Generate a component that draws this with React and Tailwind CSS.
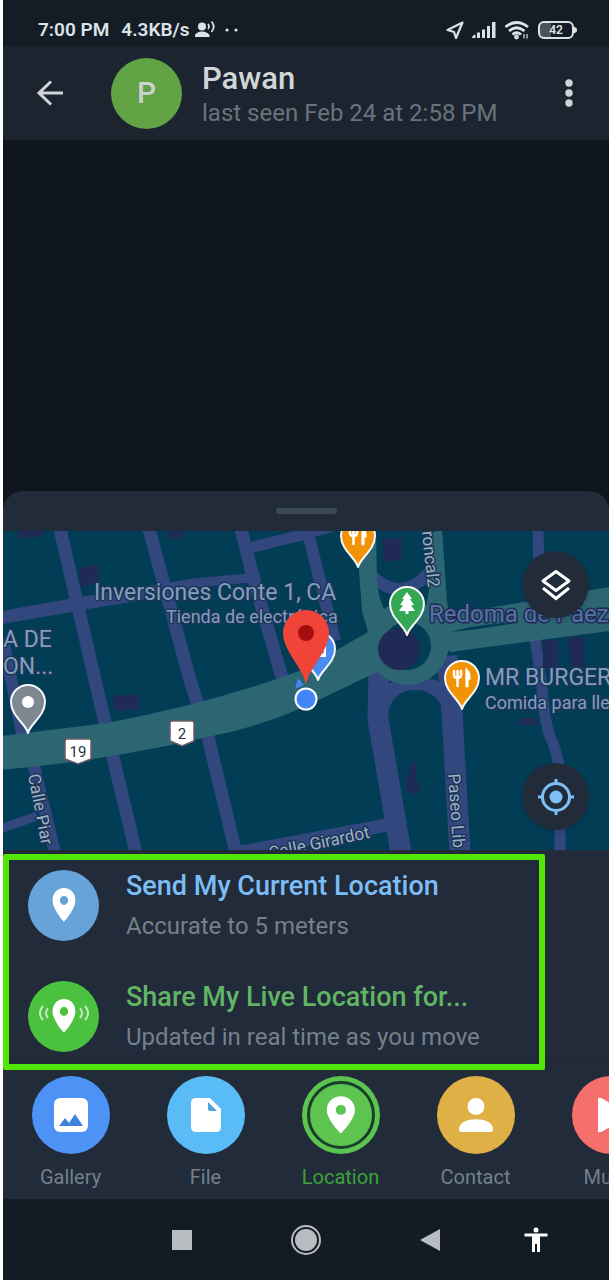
import { useState } from 'react';

const PIN_PATH = 'M0 31 C-2 22 -17 14 -17 0 A17 17 0 0 1 17 0 C17 14 2 22 0 31 Z';
const MARKER_PATH = 'M12 1 C5.7 1 1 5.7 1 12 C1 20 12 31 12 31 C12 31 23 20 23 12 C23 5.7 18.3 1 12 1 Z M12 8 A4 4 0 1 1 12 16 A4 4 0 1 1 12 8 Z';

const streets = [
    { d: 'M57 -2 L92 149 L110 226 L133 322', w: 13 },
    { d: 'M146 -2 L187 149 L205 206 L233 322', w: 13 },
    { d: 'M238 -2 L250 46 L280 150', w: 13 },
    { d: 'M0 108 L19 202 L32 239 L52 322', w: 12 },
    { d: 'M-3 87 L70 74 L140 62', w: 13 },
    { d: 'M130 62 L190 52 L257 46', w: 9 },
    { d: 'M246 17 L299 4 L330 -5', w: 11 },
    { d: 'M304 -2 L316 46 L332 110', w: 12 },
    { d: 'M-3 298 L34 285', w: 9 },
    { d: 'M228 323 L384 294', w: 13 },
    { d: 'M370 46 Q398 72 426 42', w: 12 },
    { d: 'M535 -2 L536 40 L532 107 L539 156 Q541 195 550 212 Q557 232 557 250 L557 322', w: 11 },
    { d: 'M376 140 L375 189 L384 240 L398 322', w: 21 },
    { d: 'M444 125 L449 182 L457 322', w: 21 },
    { d: 'M380 174 Q388 152 412 152 Q436 152 446 174', w: 14 },
];

const buildings = [
    'M14 0 H40 V5 L16 8 Z',
    'M76 37 L95 33 L96 52 L78 56 Z',
    'M164 0 H180 V8 H166 Z',
    'M380 7 H399 V29 L380 31 Z',
    'M540 109 H555 V137 H540 Z',
    'M565 106 H581 V136 H567 Z',
    'M110 165 L136 163 V178 L112 180 Z',
    'M517 187 H535 V194 H517 Z',
    'M409 228 L414 235 L413 248 L418 256 L413 264 L403 260 L403 250 L406 242 Z',
];

const Pin = ({ x, y, color, children }) => (
    <g transform={`translate(${x} ${y})`}>
        <path d={PIN_PATH} fill={color} stroke="#f5f7f8" strokeWidth="2" strokeLinejoin="round" />
        {children}
    </g>
);

const Cutlery = () => (
    <g fill="none" stroke="#fff" strokeLinecap="round">
        <path d="M-8 -7 V-3 Q-8 0 -4.5 0 Q-1 0 -1 -3 V-7 M-4.5 -7 V8" strokeWidth="2.6" />
        <path d="M5 8 V-7 Q7 -5 7 0 H5" strokeWidth="3.2" fill="#fff" />
    </g>
);

const Shield = ({ x, y, w, label }) => (
    <g transform={`translate(${x} ${y})`}>
        <path
            d={`M2 0 H${w - 2} Q${w} 0 ${w} 2 V20 L${w / 2} 25 L0 20 V2 Q0 0 2 0 Z`}
            fill="#fff"
            stroke="#6b5a66"
            strokeWidth="1.5"
        />
        <text x={w / 2} y="18" textAnchor="middle" fontSize="15" fill="#2b3440">{label}</text>
    </g>
);

const MapCanvas = () => (
    <svg
        viewBox="0 0 606 319"
        preserveAspectRatio="xMidYMid slice"
        className="block h-[319px] w-full bg-[#023d56] font-[Roboto,sans-serif]"
        role="img"
        aria-label="Map"
    >
        <g fill="none" stroke="#33477f" strokeLinejoin="round">
            {streets.map((s) => (
                <path key={s.d} d={s.d} strokeWidth={s.w} />
            ))}
        </g>

        <g fill="#1f2a55">
            {buildings.map((d) => (
                <path key={d} d={d} />
            ))}
        </g>

        {/* Main avenue and roundabout */}
        <g fill="#2b6672">
            <path d="M-2 205 L104 192 Q210 172 299 139 L365 101 L385 125 L374 141 L299 177 Q250 198 200 207 Q100 230 -2 239 Z" />
            <path d="M355 -2 H373 L374 50 Q375 66 382 80 L400 95 L372 112 L365 101 L359 80 L356 40 Z" />
            <path d="M427 -2 H439 L444 70 L446 84 L606 56 V100 L447 121 L420 90 L426 60 Z" />
            <ellipse cx="405" cy="112" rx="41" ry="42" />
        </g>
        <path d="M447 101 Q480 92 512 92 Q480 98 447 101 Z" fill="#023d56" />
        <circle cx="404" cy="115" r="24" fill="#023d56" />
        <circle cx="396" cy="118" r="21" fill="#1f2a55" />

        {/* Labels */}
        <g fill="#7f9fbd" stroke="#1d3557" strokeWidth="3" strokeLinejoin="round" paintOrder="stroke">
            <g fontSize="23">
                <text x="91" y="69">Inversiones Conte 1, CA</text>
                <text x="0" y="116">A DE</text>
                <text x="0" y="143">ON...</text>
                <text x="482" y="154">MR BURGER</text>
            </g>
            <text x="426" y="91" fontSize="24" fill="#5573a3" stroke="#1f2a55">Redoma de Páez</text>
            <g fontSize="18">
                <text x="163" y="92">Tienda de electrónica</text>
                <text x="482" y="178">Comida para lle</text>
            </g>
            <g fontSize="17" fill="#9db3c4">
                <text transform="translate(418 -9) rotate(84)">Troncal2</text>
                <text transform="translate(25 244) rotate(79)">Calle Piar</text>
                <text transform="translate(445 243) rotate(86)">Paseo Lib</text>
                <text transform="translate(267 328) rotate(-12)">Calle Girardot</text>
            </g>
        </g>

        <Shield x={62} y={208} w={26} label="19" />
        <Shield x={167} y={190} w={24} label="2" />

        <Pin x={355} y={5} color="#f29305"><Cutlery /></Pin>
        <Pin x={459} y={147} color="#f29305"><Cutlery /></Pin>
        <Pin x={25} y={171} color="#7d8890"><circle r="6" fill="#fff" /></Pin>
        <Pin x={404} y={73} color="#34a853">
            <path d="M0 -12 L5 -5 H3 L7 1 H4 L8 7 H1.5 V10 H-1.5 V7 H-8 L-4 1 H-7 L-3 -5 H-5 Z" fill="#fff" />
        </Pin>
        <Pin x={315} y={118} color="#4a8df0">
            <path d="M-7 -3 H3 V-5 H8 V8 H-7 Z" fill="#fff" />
            <circle cx="3" cy="2" r="3" fill="#4a8df0" />
        </Pin>

        {/* Current position */}
        <path d="M292 158 L295 147 L301 154 Z" fill="#4285f4" />
        <circle cx="303" cy="168" r="10.5" fill="#4285f4" stroke="#fff" strokeWidth="2" />
        <path d="M303 154 C301 138 280 120 280 102 A23 23 0 0 1 326 102 C326 120 305 138 303 154 Z" fill="#f04438" />
        <circle cx="303" cy="102" r="8" fill="#a50e0e" />
    </svg>
);

const StatusBar = () => (
    <div className="flex h-[46px] items-center justify-between bg-[#141d26] pt-3.5 pr-8 pl-[35px] text-[#dde2e7]">
        <div className="flex items-center text-[19px] leading-6 font-semibold">
            <span>7:00 PM</span>
            <span className="ml-3">4.3KB/s</span>
            <svg className="ml-1 h-5 w-[22px]" viewBox="0 0 22 20" fill="currentColor">
                <circle cx="8" cy="6.5" r="4" />
                <path d="M1 17 V15 Q3 11.5 8 11.5 Q13 11.5 15.5 15 V17 Z" />
                <path d="M14 4 Q16 6.5 14 9 M17.5 1.5 Q22 6.5 17.5 12" fill="none" stroke="currentColor" strokeWidth="1.8" />
            </svg>
            <svg className="ml-2 h-1 w-4" viewBox="0 0 16 4" fill="currentColor">
                <circle cx="3" cy="2" r="1.6" />
                <circle cx="12" cy="2" r="1.6" />
            </svg>
        </div>
        <div className="flex items-center">
            <svg className="h-5 w-[18px]" viewBox="0 0 18 20" fill="none" stroke="currentColor" strokeWidth="2.2" strokeLinejoin="round">
                <path d="M16.5 2.5 L1.5 10 L8 12 L10 18 Z" />
            </svg>
            <svg className="ml-2 h-5 w-6" viewBox="0 0 24 20" fill="currentColor">
                <path d="M0 18 Q0 15.5 3.5 14.5 V18 Z M5 12.500 H8 V18 H5 Z M10 9.500 H13 V18 H10 Z M15 6 H18 V18 H15 Z M20 2 H23.500 V18 H20 Z" />
            </svg>
            <svg className="ml-2 h-5 w-[26px]" viewBox="0 0 26 20" fill="none" stroke="currentColor" strokeWidth="2.8">
                <path d="M1.5 7 Q12.5 -2 24 7 M5 11 Q12.5 4.5 20.5 11 M8.5 14.5 Q12.5 11 17 14.5" />
                <circle cx="12.5" cy="17" r="1" />
                <path d="M20 14 V18.5 M23 14 V18.5" strokeWidth="1.2" />
            </svg>
            <span className="ml-2 flex h-[18px] w-9 items-center justify-center rounded-md border-2 border-current bg-linear-to-r from-[#4b535c] from-35% to-transparent to-35% text-xs leading-3 font-semibold">
                42
            </span>
            <span className="h-1.5 w-[3px] rounded-r bg-current" />
        </div>
    </div>
);

const ChatHeader = () => (
    <header className="flex h-[95px] items-center border-b border-[#111820] bg-[#1c252f] pr-6 pl-[33px]">
        <button type="button" aria-label="Back" className="text-[#d0d4d8]">
            <svg className="h-7 w-7" viewBox="0 0 28 28" fill="none" stroke="currentColor" strokeWidth="3">
                <path d="M27 14 H3 M15 2.5 L3 14 L15 25.5" />
            </svg>
        </button>
        <div className="ml-[47px] flex h-[71px] w-[71px] items-center justify-center rounded-full bg-[#61a244] text-3xl font-medium text-[#cbd0d0]">
            P
        </div>
        <div className="ml-5 flex-1 pt-[3px]">
            <h1 className="text-[31px] leading-9 font-medium text-[#d2d5d8]">Pawan</h1>
            <p className="text-2xl leading-8 text-[#69737e]">last seen Feb 24 at 2:58 PM</p>
        </div>
        <button type="button" aria-label="More options" className="text-[#d0d4d8]">
            <svg className="h-8 w-8" viewBox="0 0 32 32" fill="currentColor">
                <circle cx="16" cy="6" r="3.7" />
                <circle cx="16" cy="16" r="3.7" />
                <circle cx="16" cy="26" r="3.7" />
            </svg>
        </button>
    </header>
);

const LocationOption = ({ title, subtitle, titleClass, iconClass, live }) => (
    <button type="button" className="flex w-full items-center text-left">
        <span className={`flex h-[71px] w-[71px] shrink-0 items-center justify-center rounded-full ${iconClass}`}>
            <svg className="h-9 w-[54px]" viewBox="0 0 54 36" fill="#fff">
                <path d={MARKER_PATH} fillRule="evenodd" transform="translate(14.5 0) scale(1.04 1.12)" />
                {live && (
                    <g fill="none" stroke="#c5ecc0" strokeWidth="2">
                        <path d="M6 8 Q0 15 6 22 M11 10 Q7 15 11 20 M48 8 Q54 15 48 22 M43 10 Q47 15 43 20" />
                    </g>
                )}
            </svg>
        </span>
        <span className="ml-[27px] block pt-0.5">
            <span className={`block text-[27px] leading-10 font-medium ${titleClass}`}>{title}</span>
            <span className="block text-2xl leading-10 text-[#76808b]">{subtitle}</span>
        </span>
    </button>
);

const attachTabs = [
    {
        id: 'gallery',
        label: 'Gallery',
        bg: 'bg-[#4d93f5]',
        icon: (
            <>
                <rect x="3" y="3" width="34" height="34" rx="6" fill="#fff" />
                <path d="M8 31 L14 23 L18 28 L24 19 L32 31 Z" fill="#3f83df" />
            </>
        ),
    },
    {
        id: 'file',
        label: 'File',
        bg: 'bg-[#59bcf6]',
        icon: (
            <>
                <path d="M10 3 H24 L35 14 V32 Q35 37 30 37 H10 Q5 37 5 32 V8 Q5 3 10 3 Z" fill="#fff" />
                <path d="M22 7 L31 16 H24 Q22 16 22 14 Z" fill="#4aa3dc" />
            </>
        ),
    },
    {
        id: 'location',
        label: 'Location',
        bg: 'bg-[#5cc44f]',
        icon: <path d={MARKER_PATH} fill="#fff" fillRule="evenodd" transform="translate(4.5 0) scale(1.28 1.24)" />,
    },
    {
        id: 'contact',
        label: 'Contact',
        bg: 'bg-[#dfb046]',
        icon: (
            <>
                <circle cx="20" cy="11.5" r="8.5" fill="#fff" />
                <path d="M3 34 C3 21 37 21 37 34 Q37 37 34 37 H6 Q3 37 3 34 Z" fill="#fff" />
            </>
        ),
    },
    {
        id: 'music',
        label: 'Music',
        bg: 'bg-[#f56f6c]',
        icon: <path d="M7 3 Q9 2 12 4 L34 17 Q38 20 34 23 L12 36 Q9 38 7 37 Z" fill="#fff" />,
    },
];

const AttachTabs = () => {
    const [active, setActive] = useState('location');

    return (
        <nav className="flex h-[141px] overflow-hidden border-t border-[#1c2632] pt-[17px]">
            {attachTabs.map((tab) => {
                const isActive = tab.id === active;
                return (
                    <button
                        key={tab.id}
                        type="button"
                        onClick={() => setActive(tab.id)}
                        className="flex w-[135px] shrink-0 flex-col items-center"
                    >
                        <span className={`flex h-[78px] w-[78px] items-center justify-center rounded-full p-[5px] ${tab.bg}`}>
                            <span
                                className={`flex h-full w-full items-center justify-center rounded-full border-[3px] ${isActive
                                    ? 'border-[#173f2b]'
                                    : 'border-transparent'
                                }`}
                            >
                                <svg className="h-10 w-10 shrink-0" viewBox="0 0 40 40">{tab.icon}</svg>
                            </span>
                        </span>
                        <span className={`mt-2 text-xl leading-[30px] ${isActive ? 'text-[#3ea23b]' : 'text-[#74808c]'}`}>
                            {tab.label}
                        </span>
                    </button>
                );
            })}
        </nav>
    );
};

const SystemNav = () => (
    <div className="grid h-[81px] grid-cols-[1fr_124px_124px_124px_1fr] items-center bg-[#131c25] text-[#b9bcc0]">
        <button type="button" aria-label="Recent apps" className="col-start-2 justify-self-center">
            <span className="block h-5 w-5 bg-current" />
        </button>
        <button type="button" aria-label="Home" className="justify-self-center">
            <span className="block h-[30px] w-[30px] rounded-full border-2 border-current p-0.5">
                <span className="block h-full w-full rounded-full bg-current" />
            </span>
        </button>
        <button type="button" aria-label="Back" className="justify-self-center">
            <svg className="h-6 w-5" viewBox="0 0 20 24" fill="currentColor">
                <path d="M0 12 L20 1 V23 Z" />
            </svg>
        </button>
        <button type="button" aria-label="Accessibility" className="ml-8 justify-self-start text-white">
            <svg className="h-[26px] w-6" viewBox="0 0 24 26" fill="currentColor">
                <circle cx="12" cy="3" r="2.5" />
                <path d="M0.5 6.5 H23.5 V9.5 H16 V25 H13 V17 H11 V25 H8 V9.5 H0.5 Z" />
            </svg>
        </button>
    </div>
);

const App = () => (
    <div className="flex min-h-screen flex-col bg-white pl-[3px] font-[Roboto,sans-serif]">
        <StatusBar />
        <ChatHeader />
        <main className="flex flex-1 flex-col bg-[#0f161d] pt-[350px]">
            <section className="flex-1 rounded-t-[20px] bg-[#212b39]">
                <div className="flex h-10 items-center justify-center">
                    <span className="h-1.5 w-[61px] rounded-full bg-[#3c4956]" />
                </div>

                <div className="relative">
                    <MapCanvas />
                    <div className="absolute inset-y-5 right-5 flex flex-col justify-between">
                        <button
                            type="button"
                            aria-label="Map layers"
                            className="flex h-[67px] w-[67px] items-center justify-center rounded-full bg-[#212b39] shadow-md"
                        >
                            <svg className="h-8 w-8" viewBox="0 0 32 32" fill="none" stroke="#fff" strokeWidth="3">
                                <path d="M16 2.5 L29 12 L16 21.5 L3 12 Z" strokeLinejoin="round" />
                                <path d="M3 19 L16 29.5 L29 19" />
                            </svg>
                        </button>
                        <button
                            type="button"
                            aria-label="My location"
                            className="flex h-[67px] w-[67px] items-center justify-center rounded-full bg-[#212b39] shadow-md"
                        >
                            <svg className="h-9 w-9" viewBox="0 0 36 36" fill="none" stroke="#7cc0f7" strokeWidth="3">
                                <circle cx="18" cy="18" r="13.5" />
                                <circle cx="18" cy="18" r="6.5" fill="#7cc0f7" stroke="none" />
                                <path d="M18 0 V5 M18 31 V36 M0 18 H5 M31 18 H36" />
                            </svg>
                        </button>
                    </div>
                </div>

                <div className="relative flex flex-col gap-[29px] pt-3.5 pb-px pl-[25px]">
                    <LocationOption
                        title="Send My Current Location"
                        subtitle="Accurate to 5 meters"
                        titleClass="text-[#7cbdf5]"
                        iconClass="bg-[#67a3d9]"
                    />
                    <LocationOption
                        title="Share My Live Location for..."
                        subtitle="Updated in real time as you move"
                        titleClass="text-[#61b565]"
                        iconClass="bg-[#4bc23f]"
                        live
                    />
                    {/* Highlight frame */}
                    <div className="pointer-events-none absolute top-1 right-16 -bottom-3 left-0 rounded-xs border-[6px] border-[#53e803]" />
                </div>

                <AttachTabs />
            </section>
        </main>
        <SystemNav />
    </div>
);

export default App;
